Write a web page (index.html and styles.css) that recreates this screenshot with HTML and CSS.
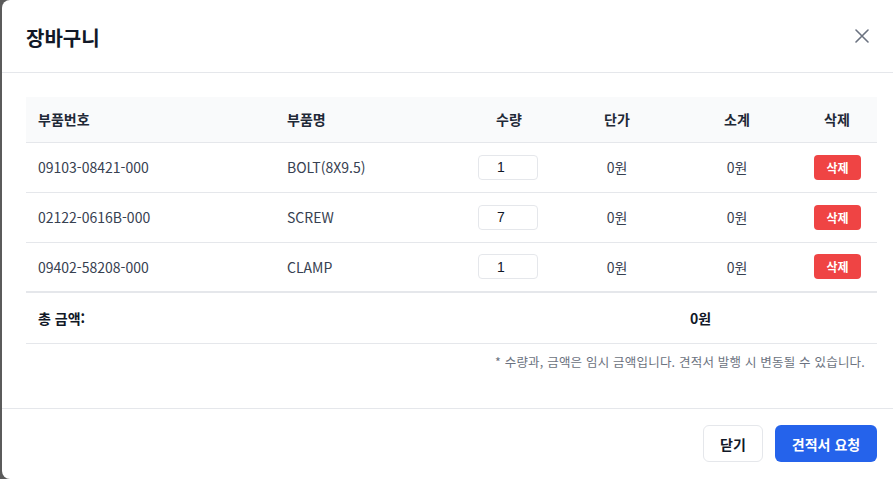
FILE: index.html
```html
<!DOCTYPE html>
<html lang="ko">
<head>
<meta charset="utf-8">
<title>장바구니</title>
<link rel="stylesheet" href="styles.css">
</head>
<body>
<div class="modal">
  <header class="modal-header">
    <h2 class="modal-title">장바구니</h2>
    <button class="close-btn" aria-label="닫기">
      <svg width="14" height="14" viewBox="0 0 14 14"><path d="M1 1L13 13M13 1L1 13" stroke="#6b7280" stroke-width="1.6" stroke-linecap="round"/></svg>
    </button>
  </header>
  <div class="modal-body">
    <table class="cart">
      <colgroup>
        <col class="c1"><col class="c2"><col class="c3"><col class="c4"><col class="c5"><col class="c6">
      </colgroup>
      <thead>
        <tr>
          <th class="left">부품번호</th>
          <th class="left">부품명</th>
          <th>수량</th>
          <th>단가</th>
          <th>소계</th>
          <th>삭제</th>
        </tr>
      </thead>
      <tbody>
        <tr>
          <td class="left">09103-08421-000</td>
          <td class="left">BOLT(8X9.5)</td>
          <td><input class="qty" type="text" value="1"></td>
          <td>0원</td>
          <td>0원</td>
          <td><button class="del-btn">삭제</button></td>
        </tr>
        <tr>
          <td class="left">02122-0616B-000</td>
          <td class="left">SCREW</td>
          <td><input class="qty" type="text" value="7"></td>
          <td>0원</td>
          <td>0원</td>
          <td><button class="del-btn">삭제</button></td>
        </tr>
        <tr class="last">
          <td class="left">09402-58208-000</td>
          <td class="left">CLAMP</td>
          <td><input class="qty" type="text" value="1"></td>
          <td>0원</td>
          <td>0원</td>
          <td><button class="del-btn">삭제</button></td>
        </tr>
      </tbody>
      <tfoot>
        <tr class="total">
          <td class="left" colspan="4">총 금액:</td>
          <td class="left total-val" colspan="2">0원</td>
        </tr>
      </tfoot>
    </table>
    <p class="note">* 수량과, 금액은 임시 금액입니다. 견적서 발행 시 변동될 수 있습니다.</p>
  </div>
  <footer class="modal-footer">
    <button class="btn btn-outline">닫기</button>
    <button class="btn btn-primary">견적서 요청</button>
  </footer>
</div>
</body>
</html>
```

FILE: styles.css
```css
html, body {
  margin: 0;
  padding: 0;
  height: 479px;
  overflow: hidden;
}
body {
  background: #5b5b5b;
  font-family: "Noto Sans CJK KR", "Noto Sans", "Liberation Sans", sans-serif;
  color: #374151;
}
.modal {
  margin-left: 2px;
  width: 899px;
  height: 479px;
  background: #ffffff;
  border-radius: 8px;
  overflow: hidden;
  display: flex;
  flex-direction: column;
}
.modal-header {
  height: 73px;
  flex: none;
  box-sizing: border-box;
  border-bottom: 1px solid #e5e7eb;
  display: flex;
  align-items: center;
  justify-content: space-between;
  padding: 0 32px 0 24px;
}
.modal-title {
  margin: 0;
  font-size: 20px;
  font-weight: 700;
  color: #111827;
  line-height: 28px;
  padding-top: 3px;
}
.close-btn {
  border: 0;
  background: none;
  padding: 0;
  width: 14px;
  height: 14px;
  display: flex;
  cursor: pointer;
}
.modal-body {
  padding: 24px 24px 0 24px;
  flex: 1;
}
.cart {
  width: 851px;
  border-collapse: collapse;
  table-layout: fixed;
  font-size: 14px;
}
.c1 { width: 249px; }
.c2 { width: 186px; }
.c3 { width: 96px; }
.c4 { width: 120px; }
.c5 { width: 120px; }
.c6 { width: 80px; }
.cart th, .cart td {
  padding: 0 12px;
  text-align: center;
  line-height: 20px;
}
.cart .left { text-align: left; }
.cart thead tr {
  height: 45px;
  background: #f9fafb;
}
.cart th {
  font-weight: 700;
  color: #1f2937;
  border-bottom: 1px solid #e5e7eb;
}
.cart tbody tr {
  height: 50px;
}
.cart tbody td {
  border-bottom: 1px solid #e5e7eb;
  color: #374151;
}
.cart tbody tr.last td {
  border-bottom: 2px solid #e5e7eb;
}
.cart tfoot tr.total {
  height: 51px;
}
.cart tfoot td {
  font-weight: 700;
  color: #111827;
  border-bottom: 1px solid #e5e7eb;
}
.cart tfoot td.total-val {
  padding-left: 13px;
}
.qty {
  width: 60px;
  height: 25px;
  box-sizing: border-box;
  border: 1px solid #e5e7eb;
  border-radius: 4px;
  font-family: "Liberation Sans", sans-serif;
  font-size: 14px;
  color: #111827;
  padding: 0 0 0 18px;
  display: block;
  margin: 0 auto 0 5px;
  outline: none;
}
.del-btn {
  width: 47px;
  height: 25px;
  border: 0;
  border-radius: 4px;
  background: #ef4444;
  color: #ffffff;
  font-family: inherit;
  font-size: 12px;
  font-weight: 700;
  padding: 0;
  margin-left: 5px;
  display: block;
}
.note {
  margin: 10px 0 0 0;
  padding-right: 12px;
  text-align: right;
  font-size: 12.5px;
  letter-spacing: 0.2px;
  line-height: 16px;
  color: #6b7280;
}
.modal-footer {
  height: 71px;
  flex: none;
  box-sizing: border-box;
  border-top: 1px solid #e5e7eb;
  display: flex;
  justify-content: flex-end;
  align-items: flex-start;
  gap: 12px;
  padding: 16px 24px 0 0;
}
.btn {
  height: 37px;
  border-radius: 6px;
  font-family: inherit;
  font-size: 14px;
  font-weight: 700;
  padding: 0;
  cursor: pointer;
}
.btn-outline {
  width: 60px;
  background: #ffffff;
  border: 1px solid #e5e7eb;
  color: #111827;
}
.btn-primary {
  width: 102px;
  background: #2563eb;
  border: 0;
  color: #ffffff;
}
```
